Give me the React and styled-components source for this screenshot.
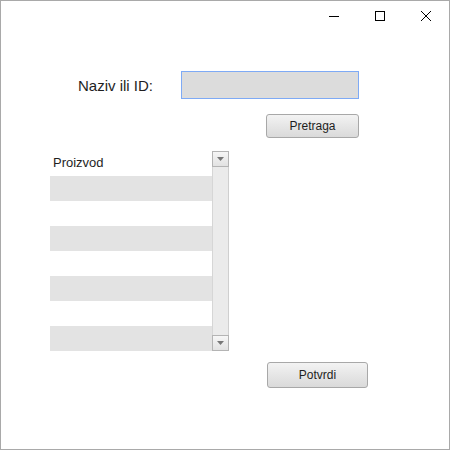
import styled, { createGlobalStyle } from "styled-components";

const GlobalStyle = createGlobalStyle`
    html, body {
        margin: 0;
        padding: 0;
        background: #ffffff;
    }
    * {
        box-sizing: border-box;
    }
`

const rows = ["", "", "", "", "", "", ""]

const TitleButton = ({children}) => <Control>{children}</Control>

const App = () => {
    return (
        <>
            <GlobalStyle/>
            <Window>
                <TitleBar>
                    <TitleButton>
                        <svg width="10" height="10" viewBox="0 0 10 10">
                            <line x1="0" y1="5.5" x2="10" y2="5.5" stroke="#000" strokeWidth="1"/>
                        </svg>
                    </TitleButton>
                    <TitleButton>
                        <svg width="10" height="10" viewBox="0 0 10 10">
                            <rect x="0.5" y="0.5" width="9" height="9" fill="none" stroke="#000" strokeWidth="1"/>
                        </svg>
                    </TitleButton>
                    <TitleButton>
                        <svg width="10" height="10" viewBox="0 0 10 10">
                            <path d="M0 0 L10 10 M10 0 L0 10" stroke="#000" strokeWidth="1"/>
                        </svg>
                    </TitleButton>
                </TitleBar>
                <Body>
                    <SearchRow>
                        <Label>Naziv ili ID:</Label>
                        <Field/>
                    </SearchRow>
                    <Button width={93} height={24} left={265}>Pretraga</Button>
                    <ListBox>
                        <Rows>
                            <Header>Proizvod</Header>
                            {rows.map((r, i) => <Row key={i} shaded={i % 2 === 0}>{r}</Row>)}
                        </Rows>
                        <ScrollBar>
                            <Arrow>
                                <svg width="7" height="4" viewBox="0 0 7 4"><path d="M0 0 H7 L3.5 4 Z" fill="#777"/></svg>
                            </Arrow>
                            <Track/>
                            <Arrow>
                                <svg width="7" height="4" viewBox="0 0 7 4"><path d="M0 0 H7 L3.5 4 Z" fill="#777"/></svg>
                            </Arrow>
                        </ScrollBar>
                    </ListBox>
                    <Button width={101} height={26} left={266} top={11}>Potvrdi</Button>
                </Body>
            </Window>
        </>
    )
}

const Window = styled.div`
    width: 450px;
    height: 450px;
    border: 1px solid #a9a9a9;
    background: #ffffff;
    font-family: "Liberation Sans", Arial, sans-serif;
    color: #1e1e1e;
    display: flex;
    flex-direction: column;
`
const TitleBar = styled.div`
    height: 30px;
    display: flex;
    justify-content: flex-end;
`
const Control = styled.div`
    width: 46px;
    height: 30px;
    display: flex;
    align-items: center;
    justify-content: center;
`
const Body = styled.div`
    display: flex;
    flex-direction: column;
    align-items: flex-start;
    padding-top: 40px;
`
const SearchRow = styled.div`
    display: flex;
    align-items: center;
    margin-left: 77px;
`
const Label = styled.span`
    font-size: 15px;
    width: 103px;
`
const Field = styled.div`
    width: 178px;
    height: 28px;
    background: #dcdcdc;
    border: 1px solid #7eaaf5;
`
const Button = styled.button`
    width: ${props => props.width}px;
    height: ${props => props.height}px;
    margin-left: ${props => props.left}px;
    margin-top: ${props => props.top || 15}px;
    border: 1px solid #a8a8a8;
    border-radius: 3px;
    background: linear-gradient(#f3f3f3, #e6e6e6 50%, #dadada);
    font-family: "Liberation Sans", Arial, sans-serif;
    font-size: 12px;
    color: #1e1e1e;
    padding: 0;
`
const ListBox = styled.div`
    display: flex;
    margin-left: 49px;
    margin-top: 13px;
    height: 200px;
`
const Rows = styled.div`
    width: 162px;
    display: flex;
    flex-direction: column;
`
const Header = styled.div`
    height: 25px;
    font-size: 13px;
    padding: 4px 0 0 3px;
`
const Row = styled.div`
    height: 25px;
    background: ${props => props.shaded ? "#e3e3e3" : "#ffffff"};
`
const ScrollBar = styled.div`
    width: 17px;
    display: flex;
    flex-direction: column;
    background: #ebebeb;
    border-left: 1px solid #d6d6d6;
    border-right: 1px solid #cfcfcf;
`
const Arrow = styled.div`
    height: 16px;
    display: flex;
    align-items: center;
    justify-content: center;
    background: linear-gradient(#f6f6f6, #e2e2e2);
    border: 1px solid #b4b4b4;
    margin: 0 -1px;
`
const Track = styled.div`
    flex: 1;
`

export default App
